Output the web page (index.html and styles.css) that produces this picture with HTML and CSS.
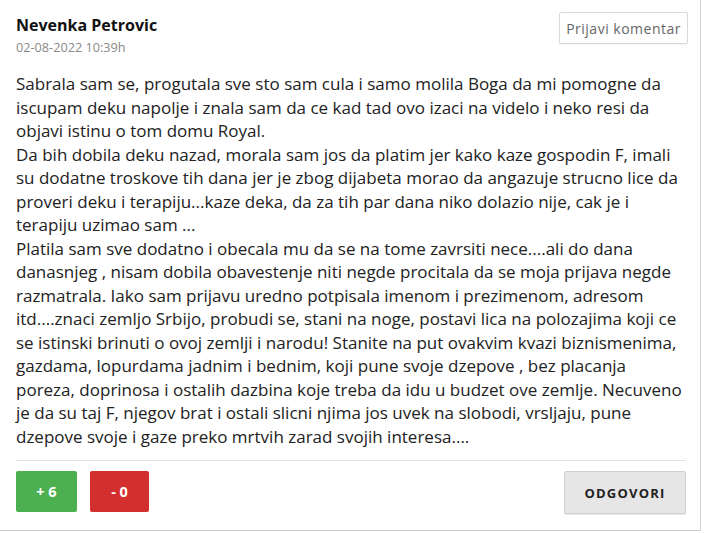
FILE: index.html
```html
<!DOCTYPE html>
<html>
<head>
<meta charset="utf-8">
<link rel="stylesheet" href="styles.css">
</head>
<body>
<div class="card">
  <div class="head">
    <div class="who">
      <div class="name">Nevenka Petrovic</div>
      <div class="date">02-08-2022 10:39h</div>
    </div>
    <button class="report">Prijavi komentar</button>
  </div>
  <div class="text">Sabrala sam se, progutala sve sto sam cula i samo molila Boga da mi pomogne da iscupam deku napolje i znala sam da ce kad tad ovo izaci na videlo i neko resi da objavi istinu o tom domu Royal.<br>Da bih dobila deku nazad, morala sam jos da platim jer kako kaze gospodin F, imali su dodatne troskove tih dana jer je zbog dijabeta morao da angazuje strucno lice da proveri deku i terapiju...kaze deka, da za tih par dana niko dolazio nije, cak je i terapiju uzimao sam ...<br>Platila sam sve dodatno i obecala mu da se na tome zavrsiti nece....ali do dana danasnjeg , nisam dobila obavestenje niti negde procitala da se moja prijava negde razmatrala. Iako sam prijavu uredno potpisala imenom i prezimenom, adresom itd....znaci zemljo Srbijo, probudi se, stani na noge, postavi lica na polozajima koji ce se istinski brinuti o ovoj zemlji i narodu! Stanite na put ovakvim kvazi biznismenima, gazdama, lopurdama jadnim i bednim, koji pune svoje dzepove , bez placanja poreza, doprinosa i ostalih dazbina koje treba da idu u budzet ove zemlje. Necuveno je da su taj F, njegov brat i ostali slicni njima jos uvek na slobodi, vrsljaju, pune dzepove svoje i gaze preko mrtvih zarad svojih interesa....</div>
  <div class="actions">
    <div class="votes">
      <button class="vote up">+ 6</button>
      <button class="vote down">- 0</button>
    </div>
    <button class="reply">ODGOVORI</button>
  </div>
</div>
</body>
</html>
```
FILE: styles.css
```css
html, body {
  margin: 0;
  padding: 0;
  background: #fff;
}
body {
  font-family: "Open Sans", "Liberation Sans", sans-serif;
}
.card {
  box-sizing: border-box;
  width: 701px;
  height: 531px;
  border-right: 1px solid #d0d0d0;
  border-bottom: 1px solid #c8c8c8;
  padding: 13px 14px 0 16px;
}
.head {
  display: flex;
  justify-content: space-between;
  align-items: flex-start;
}
.name {
  font-size: 16px;
  font-weight: 700;
  line-height: 24px;
  color: #111;
}
.date {
  font-size: 12.7px;
  line-height: 18px;
  color: #8a8a8a;
  margin-top: 1px;
}
.report {
  margin-top: -1px;
  margin-right: -2px;
  height: 32px;
  padding: 0 6px;
  background: #fff;
  border: 1px solid #d9d9d9;
  border-radius: 2px;
  font-family: inherit;
  font-size: 14px;
  letter-spacing: 0.5px;
  color: #666;
  box-shadow: 0 1px 1px rgba(0,0,0,0.05);
}
.text {
  margin-top: 16px;
  font-size: 17px;
  line-height: 23.5px;
  color: #222;
  padding-bottom: 12px;
  border-bottom: 1px solid #e2e2e2;
}
.actions {
  display: flex;
  justify-content: space-between;
  align-items: flex-start;
  padding-top: 10px;
}
.votes {
  display: flex;
  gap: 13px;
}
.vote {
  height: 41px;
  border: none;
  border-radius: 2px;
  font-family: inherit;
  font-size: 14.5px;
  font-weight: 700;
  color: #fff;
}
.up {
  width: 61px;
  background: #4caf50;
}
.down {
  width: 59px;
  background: #d32f2f;
}
.reply {
  height: 43px;
  width: 122px;
  background: #e6e6e6;
  border: 1px solid #d0d0d0;
  border-radius: 2px;
  font-family: inherit;
  font-size: 13px;
  font-weight: 700;
  letter-spacing: 1.2px;
  color: #222;
  box-shadow: 0 1px 1px rgba(0,0,0,0.1);
}
```
